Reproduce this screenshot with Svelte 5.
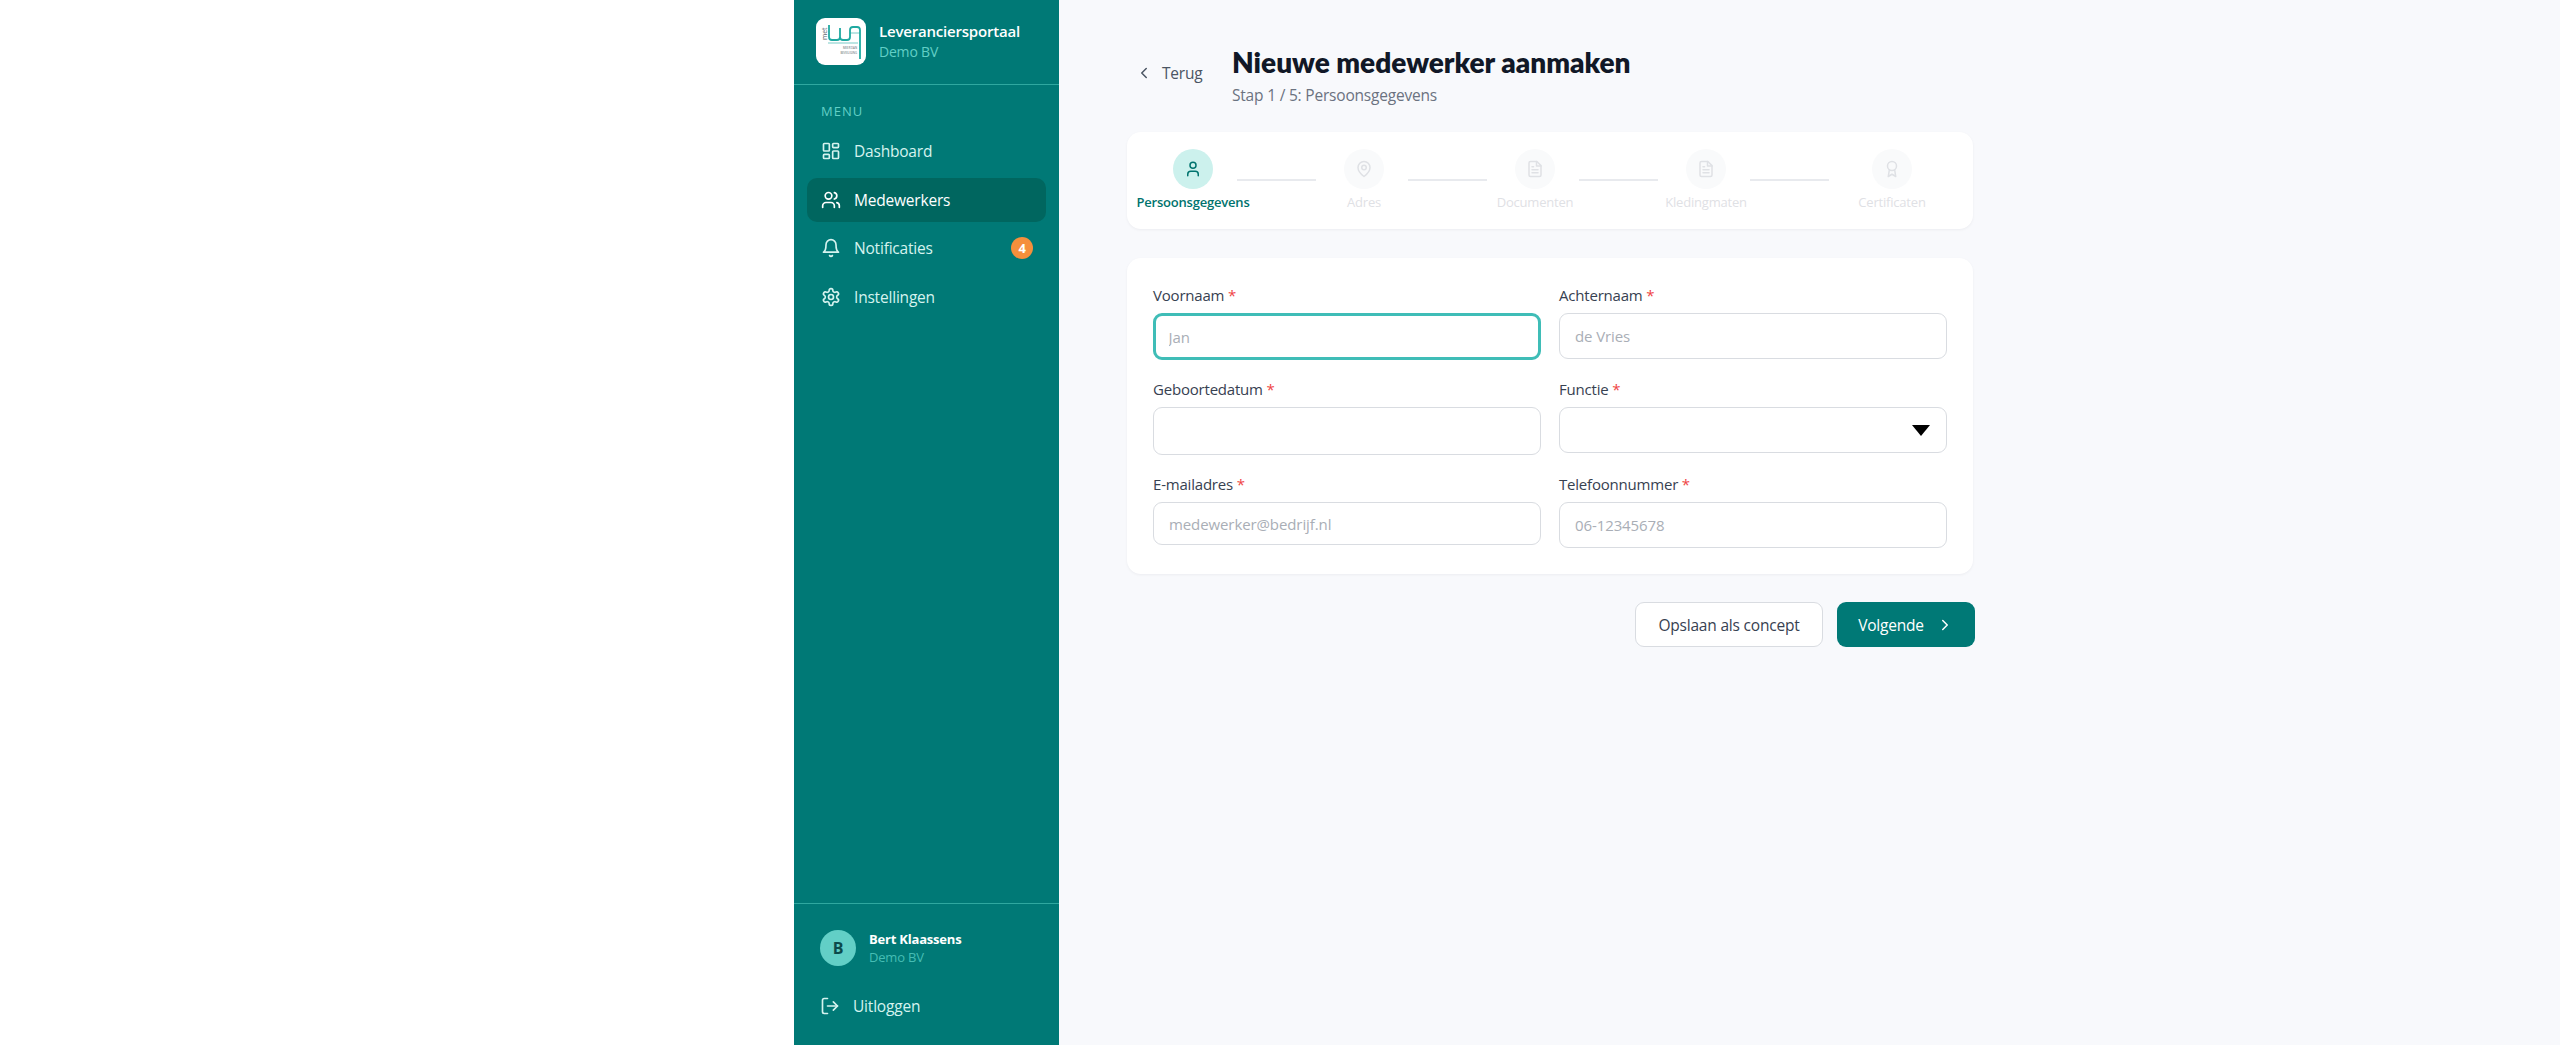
<script>
  const nav = [
    { label: 'Dashboard', icon: 'dashboard' },
    { label: 'Medewerkers', icon: 'users', active: true },
    { label: 'Notificaties', icon: 'bell', badge: 4 },
    { label: 'Instellingen', icon: 'settings' }
  ];

  const steps = [
    { label: 'Persoonsgegevens', icon: 'user', active: true },
    { label: 'Adres', icon: 'pin' },
    { label: 'Documenten', icon: 'file' },
    { label: 'Kledingmaten', icon: 'file' },
    { label: 'Certificaten', icon: 'award' }
  ];
</script>

{#snippet icon(name)}
  <svg class="icon" viewBox="0 0 24 24" fill="none" stroke="currentColor" stroke-width="2" stroke-linecap="round" stroke-linejoin="round">
    {#if name === 'dashboard'}
      <rect x="3" y="3" width="7" height="9" rx="1" /><rect x="14" y="3" width="7" height="5" rx="1" />
      <rect x="14" y="12" width="7" height="9" rx="1" /><rect x="3" y="16" width="7" height="5" rx="1" />
    {:else if name === 'users'}
      <path d="M16 21v-2a4 4 0 0 0-4-4H6a4 4 0 0 0-4 4v2" /><circle cx="9" cy="7" r="4" />
      <path d="M22 21v-2a4 4 0 0 0-3-3.87" /><path d="M16 3.13a4 4 0 0 1 0 7.75" />
    {:else if name === 'bell'}
      <path d="M6 8a6 6 0 0 1 12 0c0 7 3 9 3 9H3s3-2 3-9" /><path d="M10.3 21a1.94 1.94 0 0 0 3.4 0" />
    {:else if name === 'settings'}
      <path d="M12.22 2h-.44a2 2 0 0 0-2 2v.18a2 2 0 0 1-1 1.73l-.43.25a2 2 0 0 1-2 0l-.15-.08a2 2 0 0 0-2.73.73l-.22.38a2 2 0 0 0 .73 2.73l.15.1a2 2 0 0 1 1 1.72v.51a2 2 0 0 1-1 1.74l-.15.09a2 2 0 0 0-.73 2.73l.22.38a2 2 0 0 0 2.73.73l.15-.08a2 2 0 0 1 2 0l.43.25a2 2 0 0 1 1 1.73V20a2 2 0 0 0 2 2h.44a2 2 0 0 0 2-2v-.18a2 2 0 0 1 1-1.73l.43-.25a2 2 0 0 1 2 0l.15.08a2 2 0 0 0 2.73-.73l.22-.39a2 2 0 0 0-.73-2.73l-.15-.08a2 2 0 0 1-1-1.74v-.5a2 2 0 0 1 1-1.74l.15-.09a2 2 0 0 0 .73-2.73l-.22-.38a2 2 0 0 0-2.73-.73l-.15.08a2 2 0 0 1-2 0l-.43-.25a2 2 0 0 1-1-1.73V4a2 2 0 0 0-2-2z" />
      <circle cx="12" cy="12" r="3" />
    {:else if name === 'logout'}
      <path d="M9 21H5a2 2 0 0 1-2-2V5a2 2 0 0 1 2-2h4" /><path d="M16 17l5-5-5-5" /><path d="M21 12H9" />
    {:else if name === 'user'}
      <path d="M19 21v-2a4 4 0 0 0-4-4H9a4 4 0 0 0-4 4v2" /><circle cx="12" cy="7" r="4" />
    {:else if name === 'pin'}
      <path d="M20 10c0 6-8 12-8 12s-8-6-8-12a8 8 0 0 1 16 0Z" /><circle cx="12" cy="10" r="3" />
    {:else if name === 'file'}
      <path d="M14.5 2H6a2 2 0 0 0-2 2v16a2 2 0 0 0 2 2h12a2 2 0 0 0 2-2V7.5L14.5 2z" /><path d="M14 2v6h6" />
      <path d="M16 13H8" /><path d="M16 17H8" /><path d="M10 9H8" />
    {:else if name === 'award'}
      <circle cx="12" cy="8" r="6" /><path d="M15.48 12.89 17 22l-5-3-5 3 1.52-9.11" />
    {:else if name === 'left'}
      <path d="M15 18l-6-6 6-6" />
    {:else if name === 'right'}
      <path d="M9 18l6-6-6-6" />
    {/if}
  </svg>
{/snippet}

<div class="page">
  <aside class="sidebar">
    <div class="brand">
      <div class="logo">
        <svg viewBox="0 0 50 47" width="50" height="47">
          <path d="M13 7V19Q13 22 16 22H21Q24 22 24 19V10V19Q24 22 27 22H31Q34 22 34 19V12Q34 9 37 9H41Q44 9 44 12V41" fill="none" stroke="#1fa9a1" stroke-width="1.8" />
          <path d="M34 15H44M12 25H42" fill="none" stroke="#1fa9a1" stroke-width="0.6" />
          <text x="41" y="31" text-anchor="end" class="logo-small">MEER DAN</text>
          <text x="41" y="35.5" text-anchor="end" class="logo-small">BEVEILIGING</text>
          <text transform="translate(10.5 22) rotate(-90)" class="logo-met">met</text>
        </svg>
      </div>
      <div>
        <div class="brand-title">Leveranciersportaal</div>
        <div class="brand-sub">Demo BV</div>
      </div>
    </div>

    <div class="menu-title">MENU</div>
    <nav class="nav">
      {#each nav as item}
        <div class="nav-item" class:active={item.active}>
          {@render icon(item.icon)}
          <span>{item.label}</span>
          {#if item.badge}<span class="badge">{item.badge}</span>{/if}
        </div>
      {/each}
    </nav>

    <div class="foot">
      <div class="me">
        <div class="avatar">B</div>
        <div>
          <div class="me-name">Bert Klaassens</div>
          <div class="me-org">Demo BV</div>
        </div>
      </div>
      <div class="logout">
        {@render icon('logout')}
        <span>Uitloggen</span>
      </div>
    </div>
  </aside>

  <main class="main">
    <header class="head">
      <div class="back">
        {@render icon('left')}
        <span>Terug</span>
      </div>
      <div>
        <h1>Nieuwe medewerker aanmaken</h1>
        <p>Stap 1 / 5: Persoonsgegevens</p>
      </div>
    </header>

    <section class="card stepper">
      {#each steps as step, i}
        {#if i > 0}<div class="line"></div>{/if}
        <div class="step" class:active={step.active}>
          <div class="circle">{@render icon(step.icon)}</div>
          <div class="step-label">{step.label}</div>
        </div>
      {/each}
    </section>

    <section class="card form">
      <label class="field">
        <span class="lbl">Voornaam <em>*</em></span>
        <input class="tall focus" placeholder="Jan" />
      </label>
      <label class="field">
        <span class="lbl">Achternaam <em>*</em></span>
        <input class="tall" placeholder="de Vries" />
      </label>
      <label class="field">
        <span class="lbl">Geboortedatum <em>*</em></span>
        <input class="date" />
      </label>
      <label class="field">
        <span class="lbl">Functie <em>*</em></span>
        <div class="select"><select></select></div>
      </label>
      <label class="field">
        <span class="lbl">E-mailadres <em>*</em></span>
        <input class="mail" placeholder="medewerker@bedrijf.nl" />
      </label>
      <label class="field">
        <span class="lbl">Telefoonnummer <em>*</em></span>
        <input class="tall" placeholder="06-12345678" />
      </label>
    </section>

    <div class="actions">
      <button class="btn ghost">Opslaan als concept</button>
      <button class="btn primary">Volgende {@render icon('right')}</button>
    </div>
  </main>
</div>

<style>
  :global(body) {
    background: #fff;
  }

  .page {
    display: flex;
    height: 1045px;
    padding-left: 794px;
    font-family: "Open Sans", Lato, sans-serif;
    letter-spacing: -0.2px;
    overflow: hidden;
  }

  .icon {
    width: 20px;
    height: 20px;
    flex: none;
  }

  /* sidebar */
  .sidebar {
    width: 265px;
    flex: none;
    display: flex;
    flex-direction: column;
    background: #007976;
    color: #d5f3ef;
  }

  .brand {
    display: flex;
    align-items: center;
    gap: 13px;
    height: 85px;
    padding: 0 22px 2px;
    box-sizing: border-box;
    border-bottom: 1px solid #2fa8a0;
  }

  .logo {
    width: 50px;
    height: 47px;
    border-radius: 9px;
    background: #fff;
    flex: none;
  }

  .logo svg {
    display: block;
  }

  .logo-small {
    font-size: 2.8px;
    letter-spacing: 0;
    fill: #58666a;
  }

  .logo-met {
    font-size: 7px;
    fill: #58666a;
  }

  .brand-title {
    font-size: 15px;
    font-weight: 600;
    color: #fff;
    line-height: 22px;
  }

  .brand-sub {
    font-size: 14px;
    color: #62cfc6;
    line-height: 20px;
  }

  .menu-title {
    margin: 17px 0 0 27px;
    font-size: 13px;
    font-weight: 500;
    letter-spacing: 1px;
    line-height: 18px;
    color: #62cfc6;
  }

  .nav {
    display: flex;
    flex-direction: column;
    gap: 4.7px;
    padding: 9px 13px 0;
  }

  .nav-item {
    display: flex;
    align-items: center;
    gap: 13px;
    height: 44px;
    padding: 0 13px 0 14px;
    border-radius: 10px;
    font-size: 15.5px;
  }

  .nav-item.active {
    background: #00665f;
    color: #fff;
  }

  .badge {
    margin-left: auto;
    width: 22px;
    height: 22px;
    border-radius: 50%;
    background: #f58f3c;
    color: #fff;
    font-size: 13px;
    font-weight: 700;
    display: flex;
    align-items: center;
    justify-content: center;
  }

  .foot {
    margin-top: auto;
    border-top: 1px solid #2fa8a0;
    padding: 26px 26px 0;
    height: 142px;
    box-sizing: border-box;
  }

  .me {
    display: flex;
    align-items: center;
    gap: 13px;
  }

  .avatar {
    width: 36px;
    height: 36px;
    border-radius: 50%;
    background: #62cfc6;
    color: #0b4a4b;
    font-size: 16px;
    font-weight: 700;
    display: flex;
    align-items: center;
    justify-content: center;
  }

  .me-name {
    font-size: 13px;
    font-weight: 700;
    color: #fff;
    line-height: 18px;
  }

  .me-org {
    font-size: 13px;
    color: #45bdb4;
    line-height: 18px;
  }

  .logout {
    display: flex;
    align-items: center;
    gap: 13px;
    margin-top: 29px;
    font-size: 15.5px;
    line-height: 22px;
  }

  /* main */
  .main {
    flex: 1;
    background: #f8f9fc;
    padding: 0 0 0 68px;
    box-sizing: border-box;
  }

  .head {
    display: flex;
    align-items: flex-start;
    height: 132px;
    padding-top: 44px;
    box-sizing: border-box;
  }

  .back {
    display: flex;
    align-items: center;
    gap: 9px;
    width: 105px;
    height: 26px;
    margin-top: 16px;
    padding-left: 8px;
    box-sizing: border-box;
    font-size: 15.5px;
    color: #4b5563;
  }

  .back .icon {
    width: 18px;
    height: 18px;
  }

  h1 {
    margin: 0;
    font-family: Lato, "Open Sans", sans-serif;
    font-size: 28px;
    font-weight: 800;
    letter-spacing: 0;
    line-height: 36px;
    color: #111827;
  }

  .head p {
    margin: 4px 0 0;
    font-size: 15.5px;
    line-height: 22px;
    color: #6b7280;
  }

  .card {
    width: 846px;
    background: #fff;
    border-radius: 14px;
    box-shadow: 0 1px 3px rgba(17, 24, 39, 0.05);
  }

  .stepper {
    display: flex;
    height: 97px;
    padding: 17px 0 0 34px;
    box-sizing: border-box;
  }

  .step {
    width: 64px;
    flex: none;
    display: flex;
    flex-direction: column;
    align-items: center;
    color: #dfe1e5;
  }

  .step:last-child {
    margin-left: 15px;
  }

  .circle {
    width: 40px;
    height: 40px;
    flex: none;
    border-radius: 50%;
    background: #f9fafb;
    display: flex;
    align-items: center;
    justify-content: center;
  }

  .circle .icon {
    width: 18px;
    height: 18px;
  }

  .step.active .circle {
    background: #ccf1ed;
    color: #00736e;
  }

  .step-label {
    margin-top: 4px;
    font-size: 13px;
    font-weight: 500;
    line-height: 18px;
    white-space: nowrap;
  }

  .step.active .step-label {
    color: #00736e;
    font-weight: 600;
  }

  .line {
    width: 79px;
    height: 2px;
    flex: none;
    margin: 30px 16px 0 12px;
    background: #e8eaee;
  }

  .form {
    display: grid;
    grid-template-columns: 388px 388px;
    column-gap: 18px;
    margin-top: 29px;
    height: 316px;
    padding: 26px 26px 0;
    box-sizing: border-box;
    align-content: start;
  }

  .field {
    display: flex;
    flex-direction: column;
    margin-bottom: 18px;
  }

  .lbl {
    font-size: 15px;
    font-weight: 500;
    line-height: 22px;
    margin-bottom: 7px;
    color: #374151;
  }

  .lbl em {
    font-style: normal;
    color: #ef4444;
  }

  input,
  select {
    display: block;
    width: 100%;
    box-sizing: border-box;
    height: 46px;
    padding: 0 15px;
    border: 1.5px solid #d9dce1;
    border-radius: 9px;
    background: #fff;
    font: 15px "Open Sans", Lato, sans-serif;
    letter-spacing: -0.1px;
    color: #111827;
    outline: none;
  }

  input::placeholder {
    color: #a9aeb6;
  }

  .focus {
    border: 3px solid #3fbdb7;
    height: 47px;
    padding-left: 12.5px;
  }

  .date {
    height: 48px;
  }

  .mail {
    height: 43px;
  }

  .select {
    position: relative;
  }

  select {
    appearance: none;
  }

  .select::after {
    content: '';
    position: absolute;
    right: 17px;
    top: 18px;
    border-left: 9.5px solid transparent;
    border-right: 9.5px solid transparent;
    border-top: 11px solid #000;
  }

  .actions {
    display: flex;
    justify-content: flex-end;
    gap: 14px;
    width: 848px;
    margin-top: 28px;
  }

  .btn {
    display: flex;
    align-items: center;
    justify-content: center;
    height: 45px;
    border-radius: 9px;
    font: 500 15.5px "Open Sans", Lato, sans-serif;
    letter-spacing: -0.2px;
    cursor: pointer;
  }

  .ghost {
    width: 188px;
    border: 1.5px solid #d9dce1;
    background: #fff;
    color: #374151;
  }

  .primary {
    width: 138px;
    gap: 12px;
    border: 0;
    background: #007976;
    color: #fff;
  }

  .primary .icon {
    width: 18px;
    height: 18px;
  }
</style>
